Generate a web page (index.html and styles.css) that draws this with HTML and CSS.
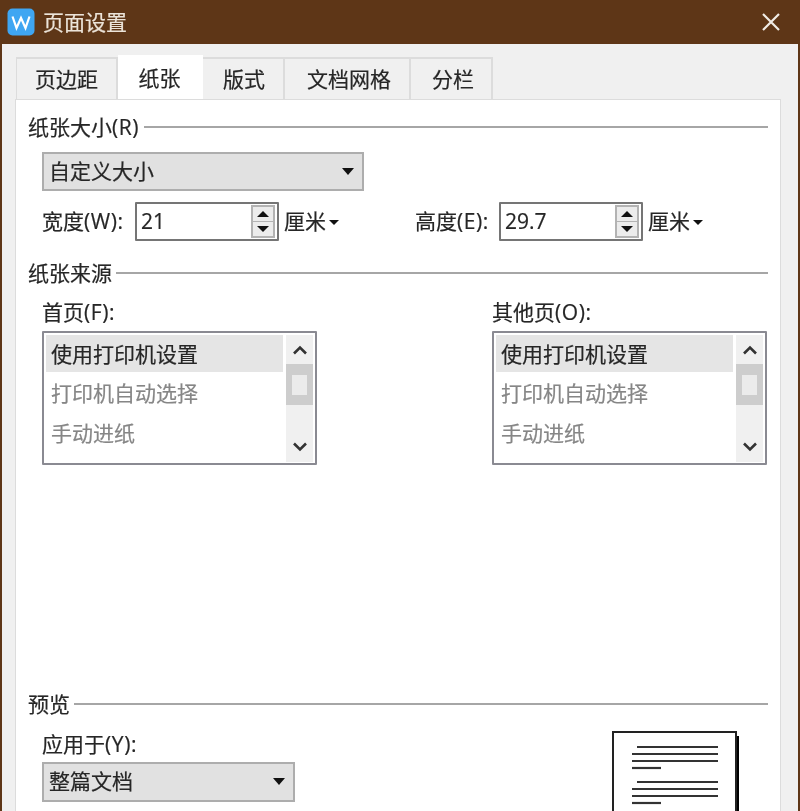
FILE: index.html
```html
<!DOCTYPE html>
<html lang="zh-CN">
<head>
<meta charset="utf-8">
<title>页面设置</title>
<link rel="stylesheet" href="styles.css">
</head>
<body>
<div class="window">
  <header class="titlebar">
    <svg class="app-icon" width="28" height="28" viewBox="0 0 28 28"><rect x="0.5" y="0.5" width="27" height="27" rx="5" fill="#3fa6f2"/><path d="M5.5 8.5 L9.5 20 L14 10 L18.5 20 L22.5 8.5" fill="none" stroke="#fff" stroke-width="2.2" stroke-linejoin="miter"/></svg>
    <span class="title">页面设置</span>
    <svg class="close" width="20" height="20" viewBox="0 0 20 20"><path d="M2 2 L18 18 M18 2 L2 18" stroke="#f1ece6" stroke-width="2.2" fill="none"/></svg>
  </header>
  <nav class="tabs">
    <div class="tab tab-a">页边距</div>
    <div class="tab tab-b active">纸张</div>
    <div class="tab tab-c">版式</div>
    <div class="tab tab-d">文档网格</div>
    <div class="tab tab-e">分栏</div>
  </nav>
  <main class="panel">
    <div class="group-head first"><span>纸张大小<em>(R)</em></span><i class="rule"></i></div>
    <div class="select select-wide"><span>自定义大小</span><b class="caret"></b></div>
    <div class="size-row">
      <div class="field">
        <label class="lab-w">宽度<em>(W):</em></label>
        <div class="spin-input"><span class="value">21</span>
          <div class="spin"><div class="spin-btn"><b class="tri-up"></b></div><div class="spin-btn"><b class="tri-down"></b></div></div>
        </div>
        <span class="unit">厘米<b class="caret small"></b></span>
      </div>
      <div class="field">
        <label class="lab-h">高度<em>(E):</em></label>
        <div class="spin-input"><span class="value">29.7</span>
          <div class="spin"><div class="spin-btn"><b class="tri-up"></b></div><div class="spin-btn"><b class="tri-down"></b></div></div>
        </div>
        <span class="unit">厘米<b class="caret small"></b></span>
      </div>
    </div>
    <div class="group-head second"><span>纸张来源</span><i class="rule"></i></div>
    <div class="sources">
      <div class="source">
        <div class="source-label">首页<em>(F):</em></div>
        <div class="list">
          <div class="items">
            <div class="item selected">使用打印机设置</div>
            <div class="item">打印机自动选择</div>
            <div class="item">手动进纸</div>
          </div>
          <div class="scrollbar">
            <div class="sb-btn"><svg width="16" height="10" viewBox="0 0 16 10"><path d="M2 8.5 L8 2.5 L14 8.5" fill="none" stroke="#333" stroke-width="2.6"/></svg></div>
            <div class="thumb"><i></i></div>
            <div class="sb-space"></div>
            <div class="sb-btn down"><svg width="16" height="10" viewBox="0 0 16 10"><path d="M2 1.5 L8 7.5 L14 1.5" fill="none" stroke="#333" stroke-width="2.6"/></svg></div>
          </div>
        </div>
      </div>
      <div class="source">
        <div class="source-label">其他页<em>(O):</em></div>
        <div class="list">
          <div class="items">
            <div class="item selected">使用打印机设置</div>
            <div class="item">打印机自动选择</div>
            <div class="item">手动进纸</div>
          </div>
          <div class="scrollbar">
            <div class="sb-btn"><svg width="16" height="10" viewBox="0 0 16 10"><path d="M2 8.5 L8 2.5 L14 8.5" fill="none" stroke="#333" stroke-width="2.6"/></svg></div>
            <div class="thumb"><i></i></div>
            <div class="sb-space"></div>
            <div class="sb-btn down"><svg width="16" height="10" viewBox="0 0 16 10"><path d="M2 1.5 L8 7.5 L14 1.5" fill="none" stroke="#333" stroke-width="2.6"/></svg></div>
          </div>
        </div>
      </div>
    </div>
    <div class="group-head third"><span>预览</span><i class="rule"></i></div>
    <div class="preview">
      <div class="apply">
        <div class="source-label">应用于<em>(Y):</em></div>
        <div class="select select-narrow"><span>整篇文档</span><b class="caret"></b></div>
      </div>
      <svg class="page" width="128" height="90" viewBox="0 0 128 90">
        <rect x="124" y="5" width="3" height="85" fill="#000"/>
        <path d="M1 90 V1 H124 V90" fill="#fff" stroke="#222" stroke-width="2"/>
        <g stroke="#333" stroke-width="2.2">
          <path d="M25 16 H106"/><path d="M20 23 H106"/><path d="M20 30 H106"/><path d="M20 37 H49"/>
          <path d="M25 51 H106"/><path d="M20 58 H106"/><path d="M20 65 H106"/><path d="M20 72 H49"/>
        </g>
      </svg>
    </div>
  </main>
</div>
</body>
</html>
```
FILE: styles.css
```css
html, body {
  margin: 0;
  padding: 0;
  height: 811px;
  overflow: hidden;
  background: #f0f0f0;
}
.window {
  width: 800px;
  height: 811px;
  box-sizing: border-box;
  overflow: hidden;
  background: #f0f0f0;
  border-left: 2px solid #5e3617;
  border-right: 2px solid #5e3617;
  font-family: "Open Sans", "Noto Sans CJK SC", sans-serif;
  font-size: 21px;
  color: #262626;
  -webkit-text-stroke: 0.2px currentColor;
  filter: blur(0.4px);
}
em {
  font-style: normal;
  letter-spacing: 0.6px;
}
.titlebar {
  height: 44px;
  margin: 0 -2px;
  padding: 0 19px 0 7px;
  background: #5e3617;
  display: flex;
  align-items: center;
}
.app-icon { flex: none; }
.title {
  margin-left: 8px;
  color: #ece4d9;
  line-height: 42px;
}
.close { margin-left: auto; }
.tabs {
  display: flex;
  margin-top: 13px;
  padding-left: 14px;
  height: 42px;
  box-sizing: border-box;
  position: relative;
  z-index: 1;
}
.tab {
  box-sizing: border-box;
  height: 42px;
  border: 2px solid #dcdcdc;
  border-bottom: 0;
  border-left-width: 0;
  background: #f0f0f0;
  text-align: center;
  line-height: 41px;
}
.tab-a { width: 102px; border-left-width: 1px; }
.tab-b { width: 85px; }
.tab-c { width: 82px; padding-left: 2px; }
.tab-d { width: 126px; padding-left: 4px; }
.tab-e { width: 82px; padding-left: 4px; }
.tab.active {
  background: #fff;
  height: 44px;
  margin-top: -2px;
  line-height: 42px;
  border-color: #fff;
}
.panel {
  height: 720px;
  margin: 0 17px 0 13px;
  padding: 13px 12px 0;
  background: #fff;
  border: 1px solid #dcdcdc;
  border-bottom: 0;
  overflow: hidden;
}
.group-head {
  display: flex;
  align-items: center;
  height: 28px;
  gap: 4px;
}
.group-head span { margin-top: -3px; }
.rule {
  flex: 1;
  height: 2px;
  margin-top: -1px;
  background: #a6a6a6;
}
.first { gap: 5px; }
.second { margin-top: 18px; }
.third { margin-top: 225px; }
.select {
  box-sizing: border-box;
  margin-left: 14px;
  padding: 0 8px 0 5px;
  background: #e1e1e1;
  border: 2px solid #adadad;
  display: flex;
  align-items: center;
  justify-content: space-between;
}
.select span { margin-top: -4px; }
.select-wide { width: 322px; height: 39px; margin-top: 11px; }
.select-narrow { width: 253px; height: 40px; margin: 3px 0 0; }
.caret {
  width: 0;
  height: 0;
  margin-top: -1px;
  border-left: 6px solid transparent;
  border-right: 6px solid transparent;
  border-top: 7px solid #111;
}
.caret.small {
  display: inline-block;
  vertical-align: middle;
  margin: 0 0 0 3px;
  border-left-width: 5px;
  border-right-width: 5px;
  border-top-width: 5px;
}
.size-row {
  display: grid;
  grid-template-columns: 373px 1fr;
  margin-top: 11px;
  padding-left: 14px;
  height: 39px;
}
.field {
  display: flex;
  align-items: center;
  height: 39px;
}
.field label, .unit { margin-top: -4px; }
.lab-w { width: 93px; flex: none; }
.lab-h { width: 84px; flex: none; }
.value { margin-top: -2px; }
.spin-input {
  box-sizing: border-box;
  width: 144px;
  height: 39px;
  padding: 1px 2px 1px 4px;
  border: 2px solid #757575;
  border-radius: 1px;
  display: flex;
  align-items: center;
  justify-content: space-between;
}
.spin {
  box-sizing: border-box;
  width: 24px;
  height: 33px;
  border: 2px solid #b3b3b3;
  background: #b3b3b3;
  display: flex;
  flex-direction: column;
  gap: 1px;
}
.spin-btn {
  flex: 1;
  background: #ececec;
  display: flex;
  align-items: center;
  justify-content: center;
}
.tri-up, .tri-down {
  width: 0;
  height: 0;
  border-left: 6px solid transparent;
  border-right: 6px solid transparent;
}
.tri-up { border-bottom: 6px solid #111; }
.tri-down { border-top: 6px solid #111; }
.unit {
  margin-left: 5px;
  white-space: nowrap;
}
.sources {
  display: grid;
  grid-template-columns: 450px 1fr;
  margin-top: 12px;
  padding-left: 14px;
}
.source-label {
  height: 28px;
  line-height: 26px;
}
.list {
  box-sizing: border-box;
  width: 275px;
  height: 134px;
  margin-top: 4px;
  padding: 2px;
  border: 2px solid #8a8a92;
  border-radius: 1px;
  display: flex;
  gap: 3px;
}
.items { width: 237px; flex: none; }
.item {
  height: 39.5px;
  line-height: 38px;
  padding-left: 5px;
  color: #868686;
}
.item.selected {
  height: 37px;
  margin-bottom: 2px;
  line-height: 38px;
  background: #e5e5e5;
  color: #262626;
}
.scrollbar {
  width: 27px;
  height: 127px;
  background: #f0f0f0;
  display: flex;
  flex-direction: column;
}
.sb-btn {
  height: 29px;
  display: flex;
  align-items: center;
  justify-content: center;
}
.sb-btn.down { height: 30px; }
.thumb {
  height: 41px;
  background: #cdcdcd;
  display: flex;
  align-items: center;
  justify-content: center;
}
.thumb i {
  width: 15px;
  height: 20px;
  background: #ebebeb;
}
.sb-space { flex: 1; }
.preview {
  display: flex;
  justify-content: space-between;
  align-items: flex-start;
  margin-top: 13px;
  padding-left: 14px;
}
.page {
  flex: none;
  margin-right: 28px;
}
```
